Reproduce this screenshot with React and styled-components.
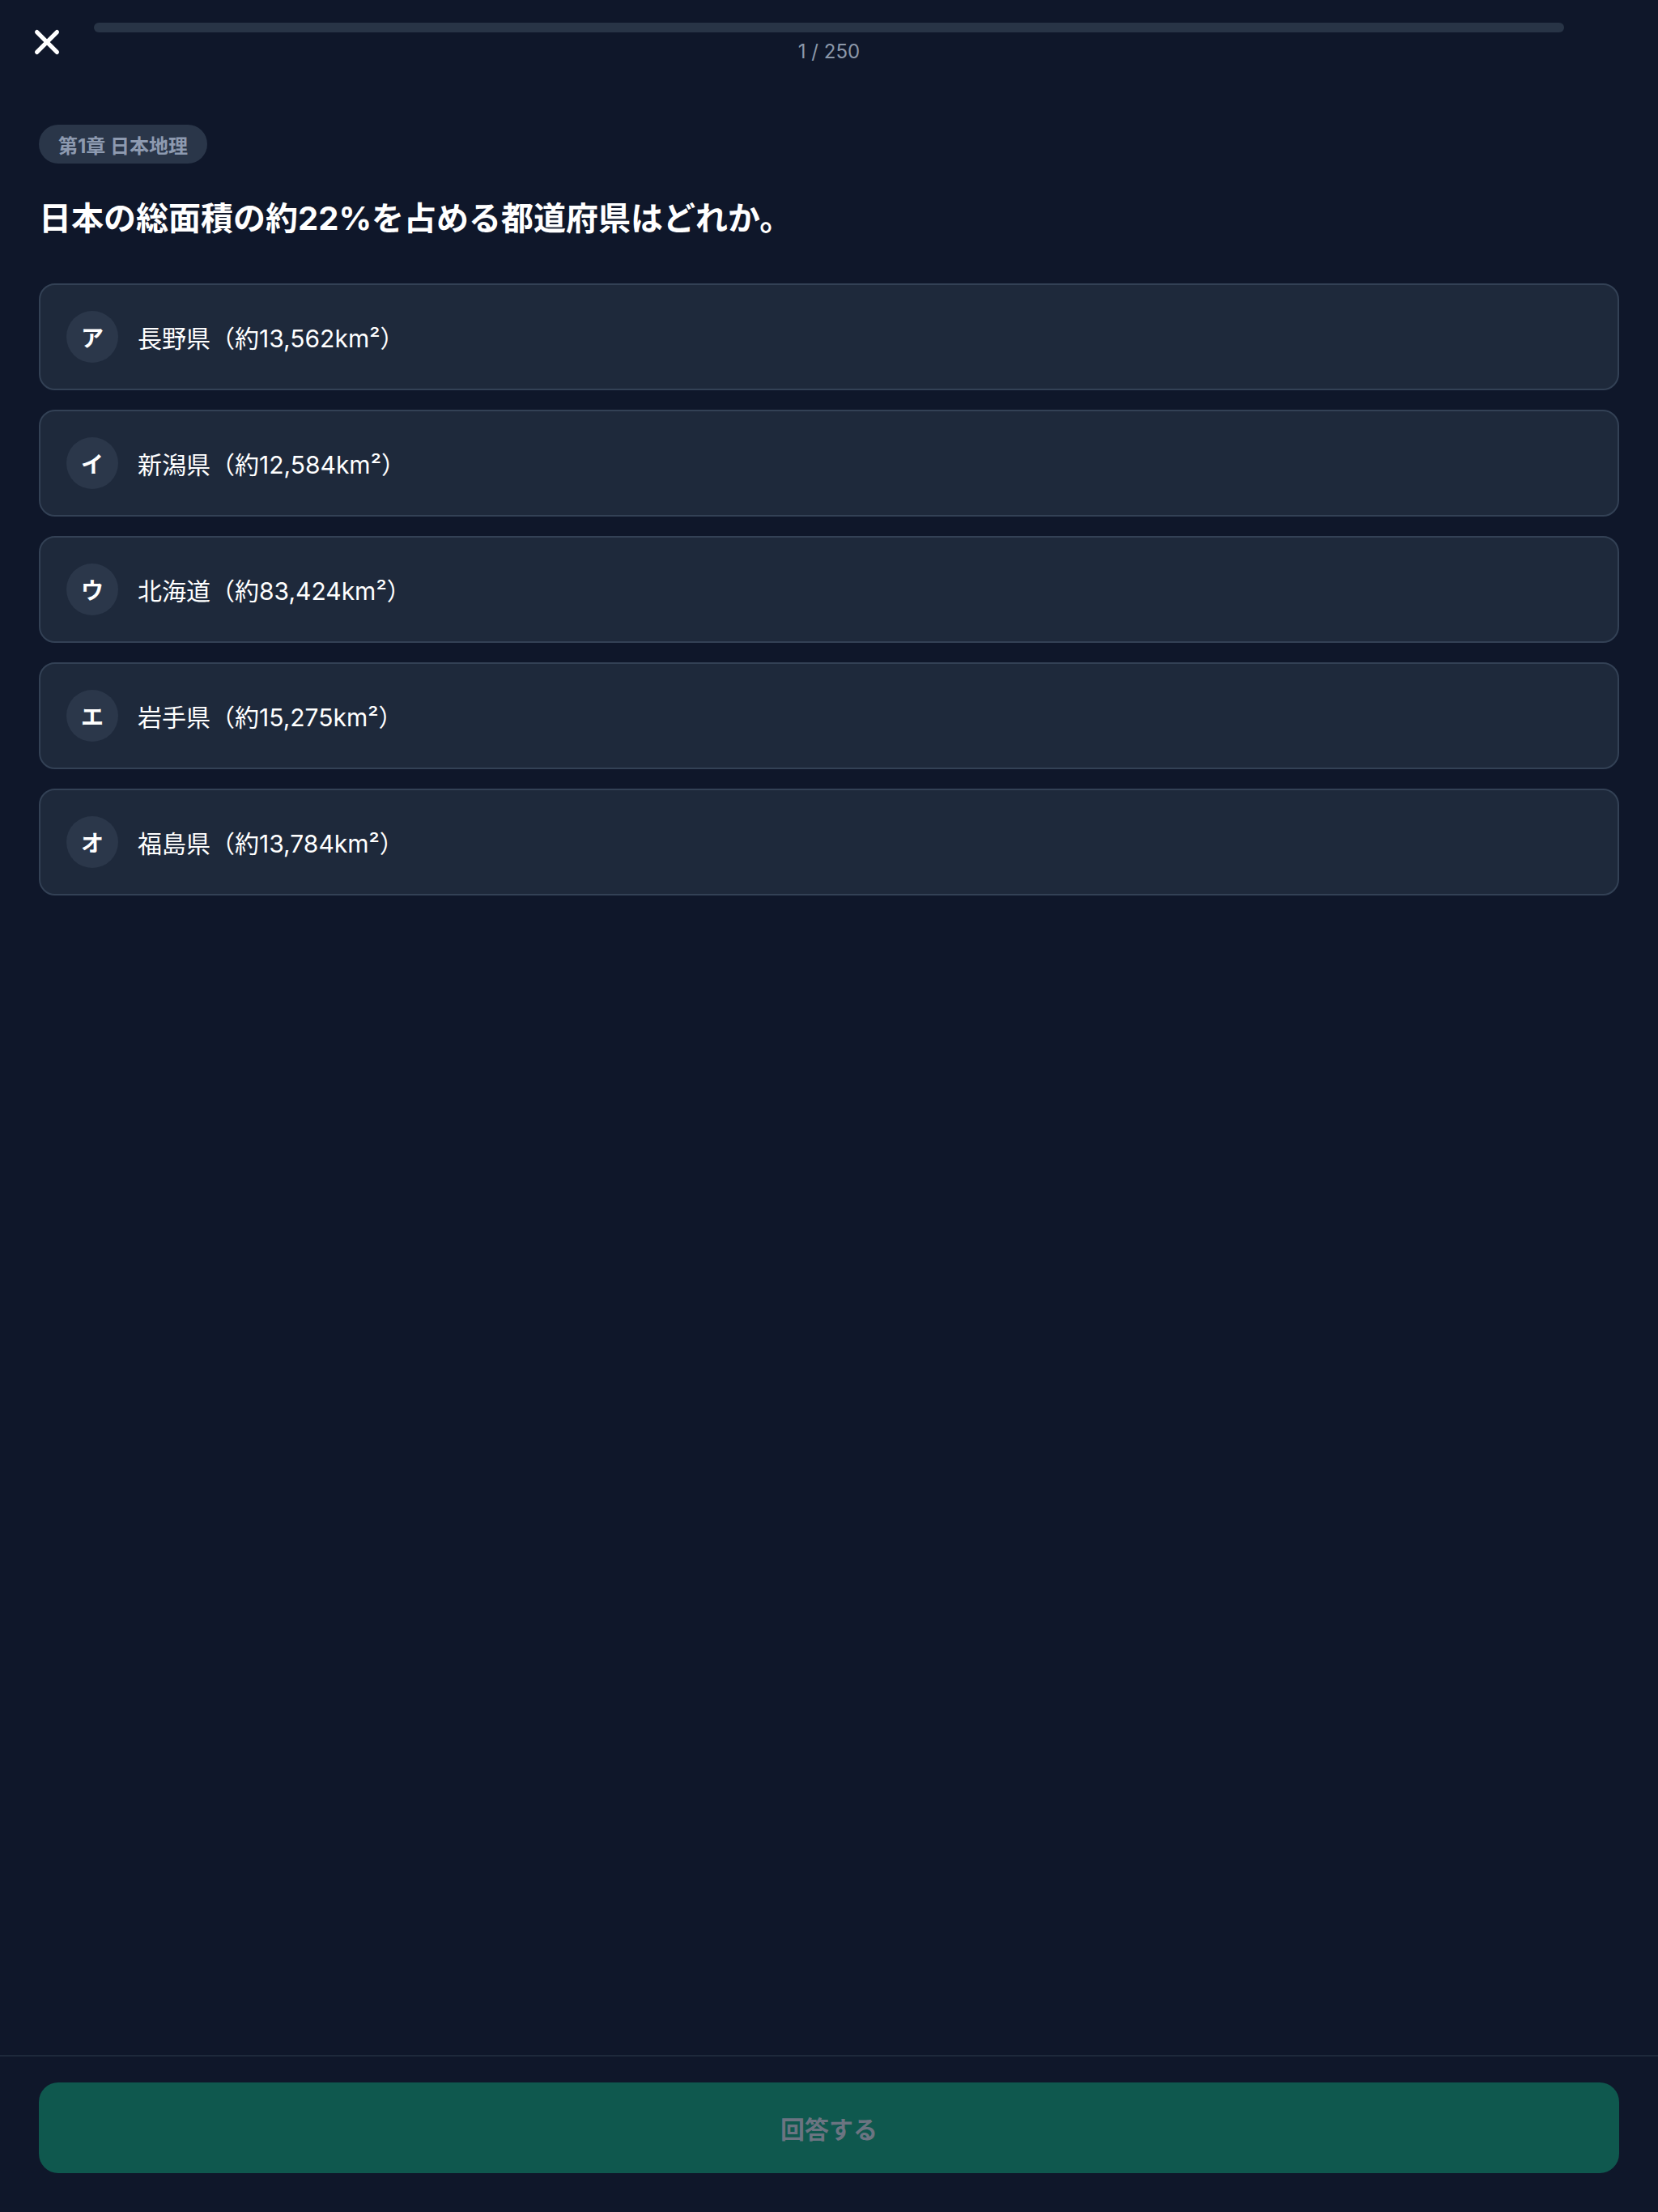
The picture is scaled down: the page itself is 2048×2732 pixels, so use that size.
import React from "react";
import styled, { createGlobalStyle } from "styled-components";

const options = [
    { mark: "ア", label: "長野県（約13,562km²）" },
    { mark: "イ", label: "新潟県（約12,584km²）" },
    { mark: "ウ", label: "北海道（約83,424km²）" },
    { mark: "エ", label: "岩手県（約15,275km²）" },
    { mark: "オ", label: "福島県（約13,784km²）" },
];

const GlobalStyle = createGlobalStyle`
    html, body {
        margin: 0;
        padding: 0;
        background: #0f172a;
    }
    body {
        font-family: Inter, "Noto Sans CJK JP", sans-serif;
        color: #ffffff;
    }
    * {
        box-sizing: border-box;
    }
`;

const CloseIcon = () => (
    <svg
        width="48"
        height="48"
        viewBox="0 0 24 24"
        fill="none"
        stroke="#ffffff"
        strokeWidth="2.6"
        strokeLinecap="round"
        strokeLinejoin="round"
    >
        <path d="M18.2 5.8 5.8 18.2" />
        <path d="m5.8 5.8 12.4 12.4" />
    </svg>
);

const App = () => {
    return (
        <Page>
            <GlobalStyle />
            <Header>
                <CloseButton aria-label="閉じる">
                    <CloseIcon />
                </CloseButton>
                <Progress>
                    <Track>
                        <Fill style={{ width: `${(1 / 250) * 0}%` }} />
                    </Track>
                    <Counter>1 / 250</Counter>
                </Progress>
                <Spacer />
            </Header>

            <Main>
                <Badge>第1章 日本地理</Badge>
                <Question>日本の総面積の約22%を占める都道府県はどれか。</Question>

                <OptionList>
                    {options.map((opt) => (
                        <Option key={opt.mark}>
                            <Mark>{opt.mark}</Mark>
                            <Label>{opt.label}</Label>
                        </Option>
                    ))}
                </OptionList>
            </Main>

            <Footer>
                <SubmitButton disabled>回答する</SubmitButton>
            </Footer>
        </Page>
    );
};

export default App;

const Page = styled.div`
    min-height: 100vh;
    display: flex;
    flex-direction: column;
    background: #0f172a;
`;

const Header = styled.header`
    display: flex;
    align-items: flex-start;
    gap: 34px;
    padding: 28px 34px 0;
`;

const CloseButton = styled.button`
    width: 48px;
    height: 48px;
    padding: 0;
    border: none;
    background: transparent;
    display: flex;
    align-items: center;
    justify-content: center;
    cursor: pointer;
`;

const Progress = styled.div`
    flex: 1;
    display: flex;
    flex-direction: column;
    align-items: center;
`;

const Track = styled.div`
    width: 100%;
    height: 12px;
    border-radius: 6px;
    background: #283446;
    overflow: hidden;
`;

const Fill = styled.div`
    height: 100%;
    background: #10b981;
`;

const Counter = styled.span`
    margin-top: 8px;
    font-size: 24px;
    line-height: 32px;
    color: #8b97a9;
`;

const Spacer = styled.div`
    width: 48px;
    flex-shrink: 0;
`;

const Main = styled.main`
    padding: 74px 48px 0;
    display: flex;
    flex-direction: column;
    align-items: flex-start;
`;

const Badge = styled.span`
    display: inline-flex;
    align-items: center;
    height: 48px;
    padding: 0 24px;
    border-radius: 24px;
    background: #2a3649;
    color: #8d9ab0;
    font-size: 24px;
    font-weight: 700;
`;

const Question = styled.h1`
    margin: 40px 0 52px;
    font-size: 40px;
    line-height: 56px;
    font-weight: 700;
    color: #ffffff;
`;

const OptionList = styled.div`
    width: 100%;
    display: flex;
    flex-direction: column;
    gap: 24px;
`;

const Option = styled.div`
    display: flex;
    align-items: center;
    gap: 24px;
    padding: 32px;
    border: 2px solid #334155;
    border-radius: 20px;
    background: #1e293b;
    cursor: pointer;
`;

const Mark = styled.span`
    width: 64px;
    height: 64px;
    flex-shrink: 0;
    border-radius: 50%;
    background: #2b374a;
    display: flex;
    align-items: center;
    justify-content: center;
    font-size: 28px;
    font-weight: 700;
    color: #ffffff;
`;

const Label = styled.span`
    font-size: 30px;
    color: #ffffff;
`;

const Footer = styled.footer`
    margin-top: auto;
    border-top: 2px solid #1e293b;
    padding: 32px 48px 48px;
`;

const SubmitButton = styled.button`
    width: 100%;
    height: 112px;
    border: none;
    border-radius: 24px;
    background: #0f584e;
    color: #6b7481;
    font-family: Inter, "Noto Sans CJK JP", sans-serif;
    font-size: 30px;
    font-weight: 700;
`;
